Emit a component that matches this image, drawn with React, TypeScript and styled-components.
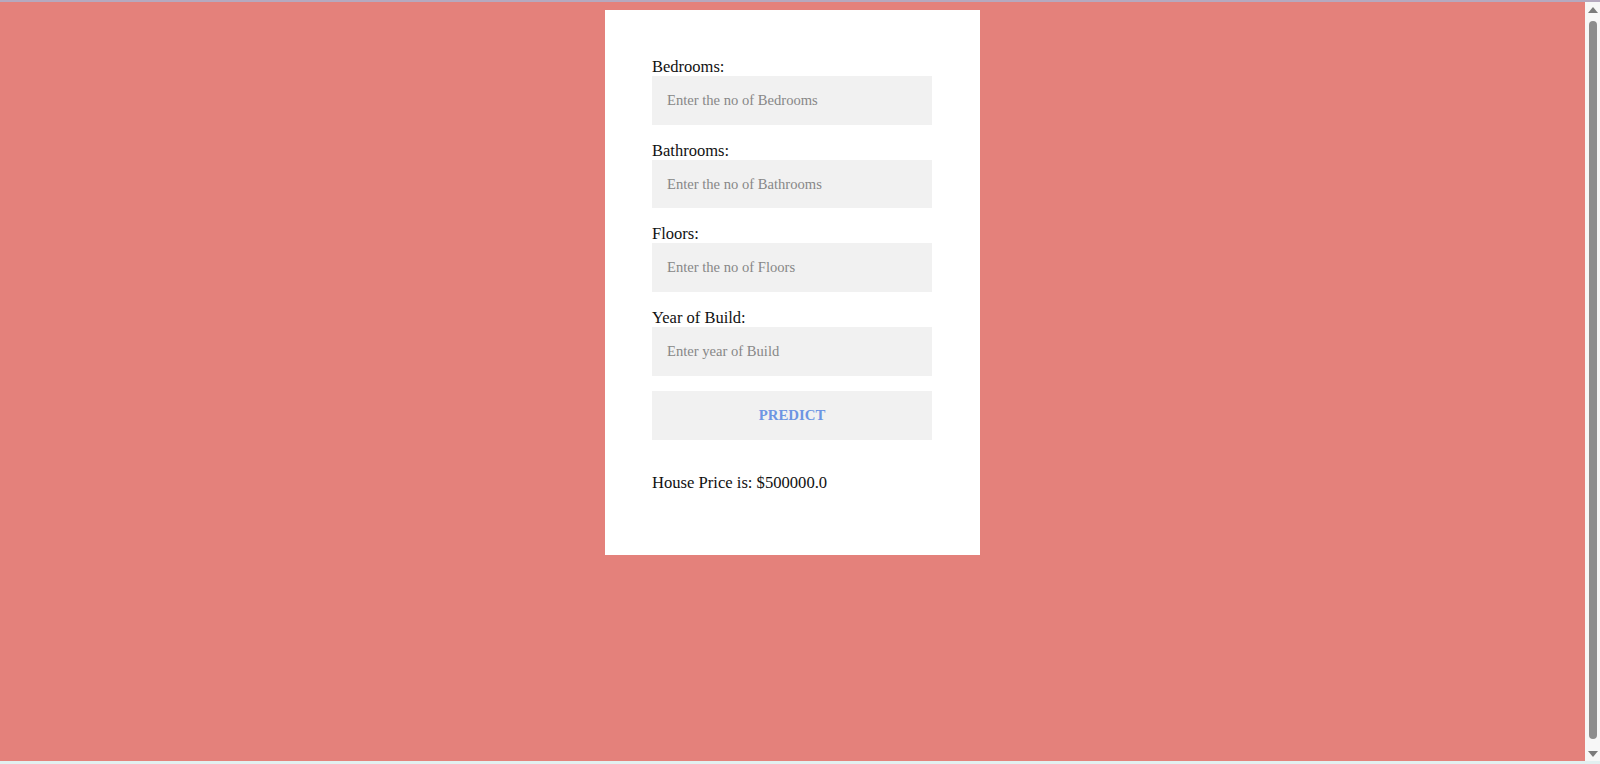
import React from "react";
import styled, { createGlobalStyle } from "styled-components";

const Global = createGlobalStyle`
  html, body { margin: 0; padding: 0; height: 100%; overflow: hidden; }
  body { font-family: "Liberation Serif", "Times New Roman", serif; }
  #root { height: 100%; }
`;

const Frame = styled.div`
  height: 764px;
  display: flex;
  flex-direction: column;
  background: #e4817b;
`;

const TopEdge = styled.div`
  height: 2px;
  background: #b5a9bf;
  flex: none;
`;

const BottomEdge = styled.div`
  height: 3px;
  background: #e2f0f0;
  flex: none;
`;

const Middle = styled.div`
  flex: 1;
  display: flex;
  min-height: 0;
`;

const Viewport = styled.main`
  flex: 1;
  display: flex;
  justify-content: center;
  align-items: flex-start;
  padding-top: 8px;
`;

const Scrollbar = styled.div`
  width: 15px;
  flex: none;
  background: #f7f7f7;
  display: flex;
  flex-direction: column;
  align-items: center;
  padding: 5px 0 4px;
  box-sizing: border-box;
  gap: 6px;
`;

const Arrow = styled.div<{ $down?: boolean }>`
  width: 0;
  height: 0;
  border-left: 5px solid transparent;
  border-right: 5px solid transparent;
  ${(p) =>
    p.$down
      ? "border-top: 6px solid #7b7b7b;"
      : "border-bottom: 6px solid #7b7b7b;"}
  flex: none;
`;

const Thumb = styled.div`
  flex: 1;
  width: 8px;
  border-radius: 4px;
  background: #8d8d8d;
  margin: 2px 0 6px;
`;

const Card = styled.form`
  width: 375px;
  box-sizing: border-box;
  background: #ffffff;
  padding: 47px 48px 63px 47px;
  display: flex;
  flex-direction: column;
`;

const Field = styled.div`
  display: flex;
  flex-direction: column;
  margin-bottom: 16px;
`;

const Label = styled.label`
  font-size: 16.5px;
  color: #111;
  line-height: 19px;
`;

const Input = styled.input`
  width: 280px;
  height: 48.7px;
  box-sizing: border-box;
  border: none;
  outline: none;
  background: #f1f1f1;
  padding: 0 15px;
  font-family: "Liberation Serif", "Times New Roman", serif;
  font-size: 14.6px;
  color: #111;
  &::placeholder {
    color: #878787;
  }
`;

const Button = styled.button`
  width: 280px;
  height: 49px;
  border: none;
  background: #f1f1f1;
  padding: 0 16px;
  font-family: "Liberation Serif", "Times New Roman", serif;
  font-size: 14.8px;
  font-weight: bold;
  color: #6d95e3;
  cursor: pointer;
  margin-top: -1px;
`;

const Result = styled.p`
  margin: 33px 0 0;
  font-size: 16.6px;
  line-height: 19px;
  color: #111;
`;

const fields = [
  { label: "Bedrooms:", placeholder: "Enter the no of Bedrooms" },
  { label: "Bathrooms:", placeholder: "Enter the no of Bathrooms" },
  { label: "Floors:", placeholder: "Enter the no of Floors" },
  { label: "Year of Build:", placeholder: "Enter year of Build" },
];

export default function App() {
  return (
    <>
      <Global />
      <Frame>
        <TopEdge />
        <Middle>
          <Viewport>
            <Card onSubmit={(e) => e.preventDefault()}>
              {fields.map((f) => (
                <Field key={f.label}>
                  <Label>{f.label}</Label>
                  <Input type="text" placeholder={f.placeholder} />
                </Field>
              ))}
              <Button type="submit">PREDICT</Button>
              <Result>House Price is: $500000.0</Result>
            </Card>
          </Viewport>
          <Scrollbar>
            <Arrow />
            <Thumb />
            <Arrow $down />
          </Scrollbar>
        </Middle>
        <BottomEdge />
      </Frame>
    </>
  );
}
